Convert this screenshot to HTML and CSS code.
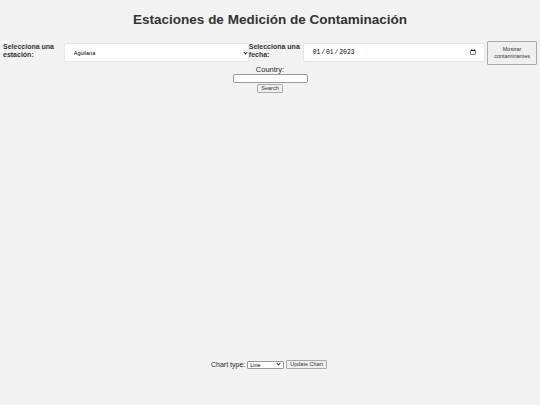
FILE: index.html
```html
<!DOCTYPE html>
<html lang="es">
<head>
<meta charset="utf-8">
<link rel="stylesheet" href="styles.css">
</head>
<body>
<h1 class="title">Estaciones de Medición de Contaminación</h1>
<div class="form-row">
  <label class="lbl">Selecciona una estación:</label>
  <span class="sel-wrap"><select class="field sel"><option>Aguilana</option></select><span class="chev"></span></span>
  <label class="lbl lbl2">Selecciona una fecha:</label>
  <input class="field date" type="date" value="2023-01-01">
  <button class="btn-show">Mostrar contaminantes</button>
</div>
<div class="search">
  <label class="country">Country:</label>
  <input class="country-input" type="text">
  <button class="small-btn">Search</button>
</div>
<div class="chart-area"></div>
<div class="chart-controls">
  <span class="ct-label">Chart type:</span>
  <span class="ct-wrap"><select class="ct-select"><option>Line</option></select><span class="chev chev-sm"></span></span>
  <button class="small-btn">Update Chart</button>
</div>
</body>
</html>
```
FILE: styles.css
```css
html, body { margin: 0; padding: 0; background: #f2f2f2; font-family: "Liberation Sans", Arial, sans-serif; color: #333; }
.title { margin: 0; padding-top: 12px; height: 30px; font-size: 13.5px; font-weight: bold; text-align: center; color: #333; line-height: 16px; box-sizing: border-box; }
.form-row { display: flex; align-items: center; padding: 10px 3px 0 3px; height: 25px; }
.lbl { font-size: 7px; font-weight: bold; width: 61px; line-height: 8px; color: #333; margin-top: -4px; }
.lbl2 { width: 54px; }
.sel-wrap { position: relative; display: block; width: 185px; height: 19px; }
.field { height: 19px; box-sizing: border-box; border: 1px solid #e6e6e6; border-radius: 2px; background: #fff; font-size: 6px; padding: 0 9px; color: #000; }
.sel { display: block; width: 185px; -webkit-appearance: none; appearance: none; font-family: "Liberation Sans", Arial, sans-serif; font-size: 5.5px; }
.chev { position: absolute; right: 2px; top: 8px; width: 2px; height: 2px; border-right: 1px solid #333; border-bottom: 1px solid #333; transform: rotate(45deg); }
.date { width: 183px; font-family: "Liberation Mono", monospace; font-size: 6.3px; padding-left: 8px; padding-right: 6px; }
.btn-show { margin-left: 2px; width: 50px; height: 24px; font-size: 5.5px; padding: 0; background: #efefef; border: 1px solid #aaa; border-radius: 1px; color: #333; font-family: "Liberation Sans", Arial, sans-serif; line-height: 7px; }
.search { display: flex; flex-direction: column; align-items: center; }
.country { font-size: 7.5px; line-height: 9px; color: #222; }
.country-input { width: 75px; height: 9px; box-sizing: border-box; border: 1px solid #999; border-radius: 2px; background: #fff; padding: 0; }
.small-btn { height: 7px; font-size: 5.5px; padding: 0 3px; line-height: 7px; border: 1px solid #aaa; border-radius: 1px; background: #efefef; color: #333; font-family: "Liberation Sans", Arial, sans-serif; box-sizing: content-box; }
.search .small-btn { margin-top: 1px; }
.chart-area { height: 267px; }
.chart-controls { display: flex; align-items: center; justify-content: center; gap: 2px; padding-right: 2px; }
.ct-label { font-size: 7px; color: #222; }
.ct-wrap { position: relative; display: block; width: 37px; height: 8px; }
.ct-select { width: 37px; height: 8px; box-sizing: border-box; font-size: 5.5px; line-height: 6px; padding: 0 0 0 2px; border: 1px solid #999; border-radius: 1px; background: #fff; -webkit-appearance: none; appearance: none; font-family: "Liberation Sans", Arial, sans-serif; color: #000; display: block; }
.chev-sm { right: 4px; top: 1.5px; width: 2px; height: 2px; }
```
